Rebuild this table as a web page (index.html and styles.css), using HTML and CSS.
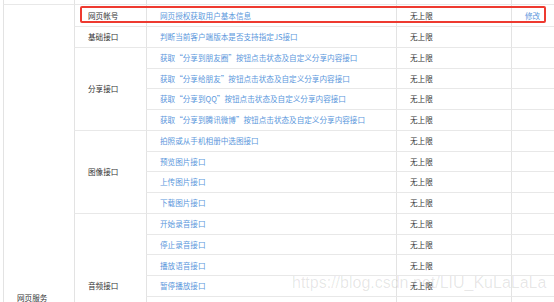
FILE: index.html
```html
<!DOCTYPE html>
<html lang="zh">
<head>
<meta charset="utf-8">
<link rel="stylesheet" href="styles.css">
</head>
<body>
<div class="page">
  <div class="grid">
    <div class="cell"></div><div class="cell"></div><div class="cell"></div><div class="cell"></div><div class="cell"></div>

    <div class="cell group span28">网页服务</div>
    <div class="cell name">网页帐号</div>
    <div class="cell link">网页授权获取用户基本信息</div>
    <div class="cell limit">无上限</div>
    <div class="cell link">修改</div>

    <div class="cell name">基础接口</div>
    <div class="cell link">判断当前客户端版本是否支持指定JS接口</div>
    <div class="cell limit">无上限</div>
    <div class="cell"></div>

    <div class="cell name span4">分享接口</div>
    <div class="cell link">获取“分享到朋友圈”按钮点击状态及自定义分享内容接口</div>
    <div class="cell limit">无上限</div>
    <div class="cell"></div>
    <div class="cell link">获取“分享给朋友”按钮点击状态及自定义分享内容接口</div>
    <div class="cell limit">无上限</div>
    <div class="cell"></div>
    <div class="cell link">获取“分享到QQ”按钮点击状态及自定义分享内容接口</div>
    <div class="cell limit">无上限</div>
    <div class="cell"></div>
    <div class="cell link">获取“分享到腾讯微博”按钮点击状态及自定义分享内容接口</div>
    <div class="cell limit">无上限</div>
    <div class="cell"></div>

    <div class="cell name span4">图像接口</div>
    <div class="cell link">拍照或从手机相册中选图接口</div>
    <div class="cell limit">无上限</div>
    <div class="cell"></div>
    <div class="cell link">预览图片接口</div>
    <div class="cell limit">无上限</div>
    <div class="cell"></div>
    <div class="cell link">上传图片接口</div>
    <div class="cell limit">无上限</div>
    <div class="cell"></div>
    <div class="cell link">下载图片接口</div>
    <div class="cell limit">无上限</div>
    <div class="cell"></div>

    <div class="cell name span7">音频接口</div>
    <div class="cell link">开始录音接口</div>
    <div class="cell limit">无上限</div>
    <div class="cell"></div>
    <div class="cell link">停止录音接口</div>
    <div class="cell limit">无上限</div>
    <div class="cell"></div>
    <div class="cell link">播放语音接口</div>
    <div class="cell limit">无上限</div>
    <div class="cell"></div>
    <div class="cell link">暂停播放接口</div>
    <div class="cell limit">无上限</div>
    <div class="cell"></div>
    <div class="cell"></div>
    <div class="cell"></div>
    <div class="cell"></div>
  </div>
  <div class="highlight"></div>
  <div class="watermark">https://blog.csdn.net/LIU_KuLaLaLa</div>
</div>
</body>
</html>
```

FILE: styles.css
```css
html, body {
  margin: 0;
  padding: 0;
  background: #ffffff;
  overflow: hidden;
}

.page {
  position: relative;
  width: 554px;
  height: 302px;
  overflow: hidden;
  padding-left: 3px;
  box-sizing: border-box;
  font-family: "Noto Sans CJK SC", "Noto Sans", sans-serif;
}

.grid {
  display: grid;
  grid-template-columns: 71px 72px 250px 115px 60px;
  grid-template-rows: 5px 22px;
  grid-auto-rows: 20.77px;
}

.cell {
  box-sizing: border-box;
  border-left: 1px solid #e3e3e3;
  border-bottom: 1px solid #e8e8e8;
  padding-left: 13px;
  display: flex;
  align-items: center;
  font-size: 7.6px;
  line-height: 1;
  white-space: nowrap;
  color: #333333;
}

.group, .name, .limit {
  color: #333333;
}

.group {
  padding-top: 3px;
}

.link {
  color: #5b97dc;
}

.span28 { grid-row: span 28; }
.span7 { grid-row: span 7; }
.span4 { grid-row: span 4; }

.highlight {
  position: absolute;
  left: 80px;
  top: 6px;
  width: 466px;
  height: 17px;
  box-sizing: border-box;
  border: 2px solid #ee3a30;
  border-radius: 2px;
}

.watermark {
  position: absolute;
  left: 292px;
  top: 274px;
  font-family: "Liberation Sans", Arial, sans-serif;
  font-size: 16px;
  line-height: 18px;
  color: rgba(0, 0, 0, 0.1);
  white-space: nowrap;
}
```
